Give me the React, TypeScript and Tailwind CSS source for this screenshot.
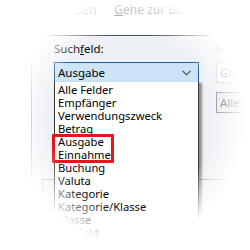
import React from 'react';

const items = [
  'Alle Felder',
  'Empfänger',
  'Verwendungszweck',
  'Betrag',
  'Ausgabe',
  'Einnahme',
  'Buchung',
  'Valuta',
  'Kategorie',
  'Kategorie/Klasse',
  'Klasse',
  'OK-Feld',
  'Buchungstext',
];

export default function App() {
  return (
    <div className="relative w-[250px] h-[250px] overflow-hidden bg-white text-black font-['Noto_Sans',sans-serif] text-[11px]">
      {/* tab headers */}
      <div className="h-[35px] flex items-start pt-[1px] text-[12px] text-[#555]">
        <span className="ml-[48px]">Ersetzen</span>
        <span className="ml-[18px]">
          <span className="underline">G</span>ehe zur Buchung
        </span>
      </div>

      {/* tab page */}
      <div className="ml-[31px] h-[215px] border-l border-t border-l-[#9aa0a8] border-t-[#4a5566] bg-[#edf0f5] flex flex-col">
        <div className="flex">
          <div className="ml-[22px] w-[145px] shrink-0 flex flex-col">
            <div className="h-[26px] pt-[5px] text-[11.5px] leading-[15px]">
              Such<span className="underline">f</span>eld:
            </div>
            <div className="h-[21px] border border-[#1f5aa0] bg-[#cce4f7] flex items-center justify-between pl-[3px] pr-[7px] text-[11.5px]">
              <span>Ausgabe</span>
              <svg width="9" height="6" viewBox="0 0 9 6" fill="none">
                <path d="M0.5 0.8 L4.5 4.8 L8.5 0.8" stroke="#444" strokeWidth="1.1" />
              </svg>
            </div>
          </div>
          <div className="ml-[17px] shrink-0 flex flex-col">
            <div className="h-[26px] pt-[5px] text-[11.5px] leading-[15px] text-[#888]">Bereich:</div>
            <div className="h-[21px] w-[80px] border border-[#c8c8c8] bg-white pl-[3px] text-[11.5px] leading-[19px] text-[#888]">Gleich</div>
            <div className="mt-[9px] h-[21px] w-[80px] border border-[#8a8a8a] bg-[#e8e8e8] pl-[3px] text-[11.5px] leading-[19px] text-[#555]">Alles</div>
          </div>
        </div>

        {/* group box */}
        <div className="mt-[66px] ml-[10px] flex-1 border-l border-t border-[#a8acb2] flex">
          <div className="ml-[171px] mt-[5px] h-[20px] shrink-0 border-l border-[#c8ccd2] pl-[6px] text-[11.5px] font-bold text-[#777] leading-[18px] whitespace-nowrap">
            Empfänger
          </div>
        </div>
      </div>

      {/* dropdown list */}
      <div className="absolute left-[54px] top-[82px] w-[145px] h-[180px] bg-white border-l border-r border-[#333] shadow-[3px_1px_2px_rgba(0,0,0,0.4)] pl-[3px] pt-[1px]">
        {items.map((it) => (
          <div key={it} className="h-[13px] leading-[13px] text-[11.2px] whitespace-nowrap">
            {it}
          </div>
        ))}
      </div>

      {/* highlight */}
      <div className="absolute left-[52px] top-[134px] w-[62px] h-[29px] border-[3px] border-[#e8141b] rounded-[1px]" />

      {/* vignette */}
      <div className="pointer-events-none absolute inset-0 bg-[radial-gradient(ellipse_115px_124px_at_130px_120px,rgba(255,255,255,0)_70%,rgba(255,255,255,0.6)_87%,#fff_100%)]" />
    </div>
  );
}
